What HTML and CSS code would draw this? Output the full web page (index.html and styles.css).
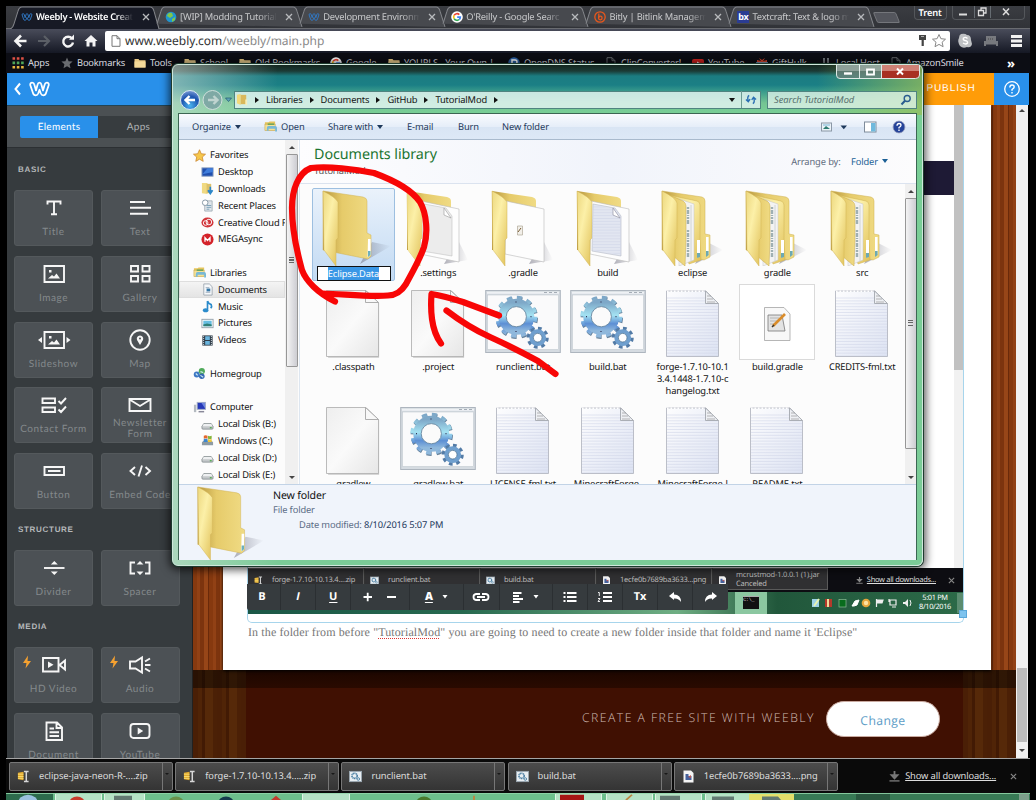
FILE: index.html
```html
<!DOCTYPE html>
<html lang="en">
<head>
<meta charset="utf-8">
<title>Weebly - Website Creator</title>
<link rel="stylesheet" href="styles.css">
</head>
<body>
<svg class="defs" width="0" height="0">
  <defs>
    <linearGradient id="gFlap" x1="0" y1="0" x2="1" y2="1"><stop offset="0" stop-color="#ecd77e"/><stop offset=".4" stop-color="#fcf0a8"/><stop offset="1" stop-color="#e0c058"/></linearGradient>
    <linearGradient id="gBack" x1="0" y1="0" x2="1" y2="0"><stop offset="0" stop-color="#b6963f"/><stop offset=".4" stop-color="#e6cb6a"/><stop offset="1" stop-color="#f0db84"/></linearGradient>
    <linearGradient id="gDoc" x1="0" y1="0" x2="1" y2="1"><stop offset="0" stop-color="#eeeeee"/><stop offset=".5" stop-color="#fafafa"/><stop offset="1" stop-color="#e6e6e6"/></linearGradient>
    <linearGradient id="gTxt" x1="0" y1="0" x2="1" y2="1"><stop offset="0" stop-color="#fdfdfe"/><stop offset="1" stop-color="#dde3f3"/></linearGradient>
    <linearGradient id="gGear" x1="0" y1="0" x2="0" y2="1"><stop offset="0" stop-color="#7ea8c8"/><stop offset=".45" stop-color="#a4e2f2"/><stop offset=".75" stop-color="#5d8fd4"/><stop offset="1" stop-color="#8fb8dc"/></linearGradient>
    <linearGradient id="gShade" x1="0" y1="0" x2="1" y2="0"><stop offset="0" stop-color="#667" stop-opacity=".5"/><stop offset="1" stop-color="#667" stop-opacity="0"/></linearGradient>
    <radialGradient id="gNav" cx=".5" cy=".8" r=".8"><stop offset="0" stop-color="#4ab4ee"/><stop offset=".6" stop-color="#1c53ae"/><stop offset="1" stop-color="#7c9bd6"/></radialGradient>
    <pattern id="pLines" width="10" height="2.9" patternUnits="userSpaceOnUse"><path d="M0 2.400H10" stroke="#cfd6e8" stroke-width=".6"/></pattern>
  </defs>

  <symbol id="folder" viewBox="0 0 76 76">
    <path d="M44 74L75 56 56 52z" fill="url(#gShade)"/>
    <path d="M7 1L47 7Q51 8 51 11V43L55 45V66L52 69 7 60z" fill="url(#gBack)" stroke="#d1b354" stroke-width=".5"/>
    <path d="M52 49h2.600v16l-3 2z" fill="#fff"/><path d="M52 61h2.500v4l-2.500 2z" fill="#6db0bd"/>
    <path d="M7 1Q19 7 22 12V48L20 50V76L8 60z" fill="url(#gFlap)" stroke="#d3b457" stroke-width=".5"/>
  </symbol>
  <symbol id="folderPaper" viewBox="0 0 76 76">
    <path d="M44 74L68 70 58 50z" fill="url(#gShade)"/>
    <path d="M7 1L47 7Q51 8 51 11V60L7 60z" fill="url(#gBack)"/>
    <path d="M21 11L59 19V72L20 64z" fill="#fdfdfd" stroke="#bbb" stroke-width=".6"/>
    <path d="M7 1Q19 7 22 12V48L20 50V76L8 60z" fill="url(#gFlap)" stroke="#d3b457" stroke-width=".5"/>
  </symbol>
  <symbol id="folderFull" viewBox="0 0 76 76">
    <path d="M40 74L68 60 52 52z" fill="url(#gShade)"/>
    <path d="M7 1L47 7Q50 8 50 11V44l5 1V67l-6 3-42-10z" fill="url(#gBack)" stroke="#cfb050" stroke-width=".5"/>
    <path d="M14 5l28 6q3 1 3 4v34l1 21-12 4z" fill="url(#gFlap)" stroke="#cfb050" stroke-width=".5"/>
    <path d="M24 9l15 5v56l-15 6z" fill="#f3f3f3" stroke="#c5c5c5" stroke-width=".5"/>
    <path d="M36 15v56" stroke="#c7cbce" stroke-width=".8"/>
    <path d="M33 17v18M33 40v28" stroke="#9fb0b3" stroke-width="2.400" stroke-dasharray="2 1 4 1 1 1"/>
    <path d="M10 3l18 8q3 2 3 5v34l-1 26-12-10z" fill="url(#gBack)" stroke="#c7a949" stroke-width=".5"/>
    <path d="M42 50h3v16l-3 2zM51 47h2.600v17l-2.600 2z" fill="#fff"/><path d="M42 63h3v4l-3 1zM51 61h2.600v4l-2.600 2z" fill="#6da9b2"/>
    <path d="M7 1Q21 8 22 13V48L20 50V76L8 60z" fill="url(#gFlap)" stroke="#d3b457" stroke-width=".5"/>
  </symbol>
  <symbol id="doc" viewBox="0 0 76 76">
    <path d="M12.500 6.500H51L63.500 18V73H12.500z" fill="#999" opacity=".5" transform="translate(.6 .8)"/>
    <path d="M11.500 6.500H51L63.500 19V72.500H11.500z" fill="url(#gDoc)" stroke="#b3b3b3" stroke-width=".9"/>
    <path d="M50.500 6.500V18.500H63.500z" fill="#f8f8f8" stroke="#a5a5a5" stroke-width=".9"/>
  </symbol>
  <symbol id="txt" viewBox="0 0 76 76">
    <path d="M11.500 7H51L63.500 20V72.500H11.500z" fill="url(#gTxt)" stroke="#b4b8c2" stroke-width=".9"/>
    <path d="M12 12H54L63 21V72H12z" fill="url(#pLines)"/>
    <path d="M12 7.300H50" stroke="#fff" stroke-width="1.400" stroke-dasharray="1.500 2"/>
    <path d="M50.500 7V19.500H63.500z" fill="#eef0f4" stroke="#a3a7ae" stroke-width=".9"/><path d="M52 12h4M52 15h6M52 18h8" stroke="#999" stroke-width=".7"/>
  </symbol>
  <symbol id="bat" viewBox="0 0 76 76">
    <rect x=".7" y="6.500" width="74.600" height="62" fill="#d5dbe1" stroke="#adb5be" stroke-width="1"/>
    <rect x="2.500" y="11" width="71" height="54.500" fill="#fafafb" stroke="#bcc3ca" stroke-width=".5"/>
    <path d="M2 8.700H74" stroke="#eef1f4" stroke-width="2"/><path d="M59 8.500h3M64 8.500h3M69 8.500h3" stroke="#a5adb6" stroke-width="1"/>
    <circle cx="31.300" cy="32.700" r="18.700" fill="none" stroke="#65819b" stroke-width="5" stroke-dasharray="4.900 4.890" transform="translate(.5 1)"/>
    <circle cx="31.300" cy="32.700" r="18.500" fill="none" stroke="url(#gGear)" stroke-width="5" stroke-dasharray="4.900 4.785"/>
    <circle cx="31.300" cy="32.700" r="14" fill="none" stroke="url(#gGear)" stroke-width="8"/>
    <circle cx="31.300" cy="32.700" r="10.100" fill="#fbfbfb" stroke="#63859f" stroke-width=".9"/>
    <path d="M31 17.500v1M31 47v1M16 32.700h1M45.500 32.700h1" stroke="#335" stroke-width="1.200"/>
    <circle cx="52.700" cy="53.700" r="9.300" fill="none" stroke="#537ba6" stroke-width="3.500" stroke-dasharray="3.650 3.650"/>
    <circle cx="52.700" cy="53.700" r="6.400" fill="none" stroke="#6f9fce" stroke-width="4"/>
    <circle cx="52.700" cy="53.700" r="4.300" fill="#fff" stroke="#4d7396" stroke-width=".8"/>
  </symbol>
  <symbol id="thumb" viewBox="0 0 76 76">
    <rect x=".5" y=".5" width="75" height="75" fill="#fff" stroke="#dadada"/>
    <path d="M25.500 23.500H45L51 30V56.500H25.500z" fill="#f8f8f8" stroke="#a5a5a5" stroke-width=".8"/>
    <path d="M29 31h14l3 16H29z" fill="#e3e3e3" stroke="#777" stroke-width=".8"/><path d="M31 34h9M31 37h8M31 40h6" stroke="#aaa" stroke-width=".8"/>
    <path d="M34 42L46 30" stroke="#d98c2b" stroke-width="2.600"/><path d="M33 43l2-2" stroke="#333" stroke-width="1.500"/>
  </symbol>

  <symbol id="w" viewBox="0 0 24 18"><path d="M2.200 4.800Q2 2.300 4.200 2.300 6 2.300 6.500 4.300L8.300 10.500 10 4.300Q10.500 2.300 12 2.300 13.500 2.300 14 4.300L15.700 10.500 17.500 4.300Q18 2.300 19.800 2.300 22 2.300 21.800 4.800L19 13Q18.200 15.700 16 15.700 14.200 15.700 13.300 13.500L12 9.800 10.700 13.500Q9.800 15.700 8 15.700 5.800 15.700 5 13z" fill="none" stroke="currentColor" stroke-width="1.900" stroke-linejoin="round"/></symbol>
  <symbol id="mfolder" viewBox="0 0 12 10"><path d="M.5 1h4l1 1.300h6V9.500H.5z" fill="#e9c883"/><path d="M.5 3.500h11v6H.5z" fill="#f4d999"/></symbol>
  <symbol id="page" viewBox="0 0 10 12"><path d="M1 .7h5L9 3.700v7.600H1z M6 .7V3.700H9" fill="none" stroke="currentColor" stroke-width="1"/></symbol>
  <symbol id="google" viewBox="0 0 14 14"><circle cx="7" cy="7" r="6.800" fill="#fff"/><g fill="none" stroke-width="1.900"><path d="M9.700 4.200A3.900 3.900 0 0 0 3.600 5.200" stroke="#ea4335"/><path d="M3.600 5.200A3.900 3.900 0 0 0 3.600 8.900" stroke="#fbbc05"/><path d="M3.600 8.900A3.900 3.900 0 0 0 9.600 9.900" stroke="#34a853"/><path d="M9.600 9.900Q10.800 9 10.900 7.100H7.200" stroke="#4285f4"/></g></symbol>
  <symbol id="close" viewBox="0 0 8 8"><path d="M1 1l6 6M7 1L1 7" stroke="currentColor" stroke-width="1.300"/></symbol>
  <symbol id="lib" viewBox="0 0 14 13"><path d="M1 2h4l1-1h6v4H1z" fill="#e6c55d"/><rect x="1" y="4" width="11" height="7" fill="#f5e195" stroke="#c7a54a" stroke-width=".6"/><path d="M3 11V8q0-2 2-2h7q2 0 2 2v4h-2V9H5v2z" fill="#79b9d6"/><path d="M4 4h7" stroke="#62a25b" stroke-width="1.500"/></symbol>
  <symbol id="disk" viewBox="0 0 14 12"><path d="M1 8l2-3h8l2 3v2q0 1-1 1H2q-1 0-1-1z" fill="#c4c8ca" stroke="#737b7f" stroke-width=".7"/><path d="M1.500 8h11L11 5.500H3z" fill="#eef0f1"/><path d="M9.500 9.500h2" stroke="#3eaa3a" stroke-width="1.200"/></symbol>
  <symbol id="zip" viewBox="0 0 12 14"><path d="M0 3l6-1v9L0 10z" fill="#e2aa2c"/><path d="M0 4.500h6M0 7h6M0 9h6" stroke="#f8dc74"/><path d="M6.500 1.500h5M9 1.500v11M6.500 12.500h5" stroke="#d8d8d8" stroke-width="1.600"/></symbol>
  <symbol id="sbat" viewBox="0 0 14 12"><rect x=".5" y=".5" width="13" height="11" fill="#e8eef2" stroke="#9aa7b1"/><circle cx="6" cy="5.300" r="2.800" fill="none" stroke="#4b7fa3" stroke-width="1.800" stroke-dasharray="1.300 .5"/><circle cx="10" cy="8.700" r="1.400" fill="none" stroke="#4b7fa3"/></symbol>
  <symbol id="png" viewBox="0 0 11 13"><path d="M.5.5H8L10.500 3V12.500H.5z" fill="#f5f5f5"/><path d="M2.500 4h3v2h3v4h-6z" fill="#46629d"/><path d="M5 7l3-2v3z" fill="#b55"/></symbol>
  <symbol id="dl" viewBox="0 0 12 12"><path d="M6 0v5M2.800 4.500L6 8l3.200-3.500z" fill="currentColor" stroke="currentColor" stroke-width="2"/><path d="M.5 10.800h11" stroke="currentColor" stroke-width="1.500"/></symbol>
</svg>

<div class="browser">
  <div class="tabstrip">
    <div class="tab active"><svg class="shape" viewBox="0 0 150 22" preserveAspectRatio="none"><path d="M0 22Q3 21 4 17L8 5Q9 1 12 1H140Q143 1 144 5L149 22"/></svg><svg class="fav blue" viewBox="0 0 24 18"><use href="#w"/></svg><span>Weebly - Website Creat</span><svg class="x"><use href="#close"/></svg></div>
    <div class="tab"><svg class="shape" viewBox="0 0 150 22" preserveAspectRatio="none"><path d="M4 17L8 5Q9 1 12 1H140Q143 1 144 5L149 20"/></svg><svg class="fav" viewBox="0 0 12 12"><circle cx="6" cy="6" r="5.300" fill="#2095cf"/><path d="M2 5q1-4 5-3l1 3-3 2zM7 8l3-2v3l-3 2z" fill="#81c74a"/></svg><span>[WIP] Modding Tutorial</span><svg class="x"><use href="#close"/></svg></div>
    <div class="tab"><svg class="shape" viewBox="0 0 150 22" preserveAspectRatio="none"><path d="M4 17L8 5Q9 1 12 1H140Q143 1 144 5L149 20"/></svg><svg class="fav blue" viewBox="0 0 24 18"><use href="#w"/></svg><span>Development Environm</span><svg class="x"><use href="#close"/></svg></div>
    <div class="tab"><svg class="shape" viewBox="0 0 150 22" preserveAspectRatio="none"><path d="M4 17L8 5Q9 1 12 1H140Q143 1 144 5L149 20"/></svg><svg class="fav"><use href="#google"/></svg><span>O'Reilly - Google Searc</span><svg class="x"><use href="#close"/></svg></div>
    <div class="tab"><svg class="shape" viewBox="0 0 150 22" preserveAspectRatio="none"><path d="M4 17L8 5Q9 1 12 1H140Q143 1 144 5L149 20"/></svg><svg class="fav" viewBox="0 0 12 12"><g fill="none" stroke="#e8571c" stroke-width="1.300"><circle cx="6" cy="6" r="5.200"/><path d="M4.800 2.500V7"/><circle cx="6.300" cy="7" r="1.800"/></g></svg><span>Bitly | Bitlink Managem</span><svg class="x"><use href="#close"/></svg></div>
    <div class="tab"><svg class="shape" viewBox="0 0 150 22" preserveAspectRatio="none"><path d="M4 17L8 5Q9 1 12 1H140Q143 1 144 5L149 20"/></svg><b class="fav bx">bx</b><span>Textcraft: Text &amp; logo m</span><svg class="x"><use href="#close"/></svg></div>
    <i class="newtab"></i>
    <div class="user">Trent</div>
    <div class="winbtns"><svg viewBox="0 0 72 12"><path d="M6 8.500h8" stroke="#ddd" stroke-width="2"/><path d="M21.500 0v12M37.500 0v12" stroke="#666c72"/><path d="M25.500 4.500h5v5h-5zM28 4V2h5v5h-2" fill="none" stroke="#ddd" stroke-width="1.300"/><path d="M50 2.500l6 6.500M56 2.500L50 9" stroke="#ddd" stroke-width="1.500"/></svg></div>
  </div>

  <div class="navbar">
    <svg class="nav" viewBox="0 0 96 20"><path d="M19.500 10H9M14 4.500L8.500 10l5.500 5.500" fill="none" stroke="#f4f4f4" stroke-width="2.600"/><path d="M31 10h10M37 5l5 5-5 5" fill="none" stroke="#5b5f66" stroke-width="2.200"/><path d="M65 7.500A4.900 4.900 0 1 0 66 11.500" fill="none" stroke="#f4f4f4" stroke-width="2.400"/><path d="M62 8.800h5V3.500z" fill="#f4f4f4"/><path d="M84 4l6.500 6H88.500v5.500h-3v-4h-3v4h-3V10H77.500z" fill="#f4f4f4"/></svg>
    <div class="omni"><svg class="pg"><use href="#page"/></svg><span class="url">www.weebly.com<em>/weebly/main.php</em></span>
      <svg class="key" viewBox="0 0 30 16"><path d="M2 2h7v5H6.800v6H4.600V7H2z" fill="#444"/><path d="M4 3.500h3" stroke="#aaa"/><path d="M22 1.500l1.900 4.200 4.600.5-3.400 3 1 4.500-4.100-2.300-4 2.300 1-4.500-3.500-3 4.600-.5z" fill="none" stroke="#888" stroke-width="1"/></svg></div>
    <svg class="ext" viewBox="0 0 70 20"><path d="M5 3q4-1 6 1 4 0 4 5l1 4q-1 4-5 3-4 2-7-1-3-5-1-8 0-3 2-4z" fill="#bfc1c4"/><path d="M11.500 7.500q-2-2-4-.5-1 2 1.500 2.500 3 .5 2.500 2.500-1.500 2-4.500 0" fill="none" stroke="#fff" stroke-width="1.400"/><path d="M28 10h14v5H40v-1.500H30V15h-2zM30 5h10v6H30z" fill="#77797e"/><path d="M32 8h6" stroke="#444" stroke-dasharray="1 1"/><path d="M55 5.500h11M55 10h11M55 14.500h11" stroke="#f2f2f2" stroke-width="3"/></svg>
  </div>

  <div class="bookmarks">
    <a><svg viewBox="0 0 12 12"><g stroke-width="2.600" stroke-dasharray="2.600 1.700"><path d="M.5 1.500h12" stroke="#df5145"/><path d="M.5 5.900h12" stroke="#4ea65a"/><path d="M.5 10.300h12" stroke="#e8b63f"/></g></svg>Apps</a>
    <a><svg viewBox="0 0 12 12"><path d="M6 .5l1.600 3.700 4 .4-3 2.700.9 4L6 9.300l-3.500 2 .9-4-3-2.700 4-.4z" fill="#6a6c70"/></svg>Bookmarks</a>
    <a><svg><use href="#mfolder"/></svg>Tools</a>
    <a><svg><use href="#mfolder"/></svg>School</a>
    <a><svg><use href="#mfolder"/></svg>Old Bookmarks</a>
    <a><svg><use href="#google"/></svg>Google</a>
    <a><svg><use href="#mfolder"/></svg>YOURLS - Your Own |</a>
    <a><svg viewBox="0 0 12 12"><circle cx="6" cy="6" r="5.800" fill="#2c62a7"/><path d="M4 10V3h3q2 0 2 2t-2 2H4" fill="none" stroke="#fff" stroke-width="1.500"/></svg>OpenDNS Status</a>
    <a><svg class="dim"><use href="#page"/></svg>ClipConverter!</a>
    <a><svg viewBox="0 0 12 12"><rect y="2" width="12" height="9" rx="2" fill="#d2231f"/><path d="M5 4.500l3.500 2L5 8.500z" fill="#fff"/></svg>YouTube</a>
    <a><svg viewBox="0 0 12 12"><path d="M1 3l4 1-2-3 3 2 3-2-2 3 4-1v8H1z" fill="#de4a32"/><path d="M0 6h12" stroke="#6bb3dc" stroke-width="1.600"/></svg>GiftHulk</a>
    <a><svg viewBox="0 0 12 12"><path d="M4 1v10M8 1v10" stroke="#70757b" stroke-width="2"/></svg>Local Host</a>
    <a><svg class="dim"><use href="#page"/></svg>AmazonSmile</a>
    <b>»</b>
  </div>

  <header class="wbar">
    <svg class="wlogo" viewBox="0 0 46 24"><path d="M10 6.500L5.500 12l4.500 5.500" fill="none" stroke="#fff" stroke-width="2"/><svg x="18" y="3.500" width="23" height="17" viewBox="0 0 24 18" color="#fff"><use href="#w"/></svg></svg>
    <div class="publish">PUBLISH</div><div class="help"><svg viewBox="0 0 18 18"><circle cx="9" cy="9" r="7.300" fill="none" stroke="#fff" stroke-width="1.300"/><path d="M6.800 7.500Q7 5 9 5q2.200 0 2.200 1.900Q11.200 8 9 9.500v1.200M9 12v1.500" fill="none" stroke="#fff" stroke-width="1.400"/></svg></div>
  </header>

  <main class="work">
    <aside class="side">
      <div class="seg"><b>Elements</b><span>Apps</span></div>
      <h2 class="first">BASIC</h2>
      <div class="tiles">
        <div class="tile"><svg viewBox="0 0 24 24"><path d="M5.500 8.500V5.500h13v3M12 5.500V18M9 18.200h6" /></svg>Title</div>
        <div class="tile"><svg viewBox="0 0 24 24"><path d="M2 6h15M2 11.800h21M2 17.700h18"/></svg>Text</div>
        <div class="tile"><svg viewBox="0 0 24 24"><path d="M2.500 4h19.500v16H2.500z"/><path d="M6 16.500h12l-3.500-5-2.500 3-2-1.500zM7 8h2.500v2.500H7z" class="f"/></svg>Image</div>
        <div class="tile"><svg viewBox="0 0 24 24"><path d="M3 4h7v5.500H3zM14.500 4h7v5.500h-7zM3 14h7v5.500H3zM14.500 14h7v5.500h-7z"/></svg>Gallery</div>
        <div class="tile"><svg class="wide" viewBox="0 0 36 24"><path d="M8.500 4h19.500v16H8.500z"/><path d="M12 16.500h12l-3.500-5-2.500 3-2-1.500zM13 8h2.500v2.500H13zM6 9v6l-4-3zM30.500 9v6l4-3z" class="f"/></svg>Slideshow</div>
        <div class="tile"><svg viewBox="0 0 24 24"><circle cx="12" cy="12" r="9.700"/><path d="M12 17l-3-5q-1-4 3-4.500 4 .5 3 4.500z" class="f"/><circle cx="12" cy="10.500" r="1" fill="#4c5155" stroke="none"/></svg>Map</div>
        <div class="tile"><svg class="wide" viewBox="0 0 36 24"><path d="M6.500 5.500h12.500v4.500H6.500zM6.500 14.500h12.500v4.500H6.500zM22.500 8l2.500 2.500 5-5.500M22.500 16.500L25 19l5-5.500"/></svg>Contact Form</div>
        <div class="tile two"><svg viewBox="0 0 24 24"><path d="M1.500 6h21v12h-21zM1.500 6.500L12 13l10.500-6.500"/></svg>Newsletter<br>Form</div>
        <div class="tile"><svg viewBox="0 0 24 24"><path d="M2.500 8h19.500v8H2.500zM6 12h12.500"/></svg>Button</div>
        <div class="tile"><svg viewBox="0 0 24 24"><path d="M7 8l-4.500 4L7 16M17.500 8l4.500 4-4.500 4M14 6.500L10.500 17.500"/></svg>Embed Code</div>
      </div>
      <h2>STRUCTURE</h2>
      <div class="tiles">
        <div class="tile"><svg viewBox="0 0 24 24"><path d="M2 12h20.500"/><path d="M12.300 5l3.500 3.500h-7zM12.300 19l3.500-3.500h-7z" class="f"/></svg>Divider</div>
        <div class="tile"><svg viewBox="0 0 24 24"><path d="M7 6.500H2.500v11H7M17 6.500h4.500v11H17"/><path d="M12 5l3.500 3.500h-7zM12 19l3.500-3.500h-7z" class="f"/></svg>Spacer</div>
      </div>
      <h2>MEDIA</h2>
      <div class="tiles">
        <div class="tile"><svg class="bolt" viewBox="0 0 10 14"><path d="M6 .5L1 8h3.500L3.500 13.500 9 6H5.500z"/></svg><svg class="wide" viewBox="0 0 36 24"><path d="M7 5h15.500v13.500H7zM23.500 12l5.500-4.500v9z"/><path d="M12 8.500v6.500l5.500-3.200z" class="f"/></svg>HD Video</div>
        <div class="tile"><svg class="bolt" viewBox="0 0 10 14"><path d="M6 .5L1 8h3.500L3.500 13.500 9 6H5.500z"/></svg><svg viewBox="0 0 24 24"><path d="M2 8.500h5.500L14 4.500v15l-6.500-4H2zM17 8.500l5-3M17 12h5.500M17 15.500l5 3"/></svg>Audio</div>
        <div class="tile"><svg viewBox="0 0 24 24"><path d="M4.500 3.500H15L20 8.500v12.500H4.500zM14.500 3.500v5.500H20M7.500 9.500H12M7.500 13.300h9.500M7.500 17h9.500"/></svg>Document</div>
        <div class="tile"><svg viewBox="0 0 24 24"><rect x="2.500" y="5" width="19" height="14" rx="3"/><path d="M9.700 8.500v7l5.500-3.500z" class="f"/></svg>YouTube</div>
      </div>
    </aside>

    <section class="canvas">
      <div class="page">
        <div class="shot">
          <div class="shotview"><i class="navy"></i><div class="sbar2"><i></i></div></div>
          <div class="mini">
            <div class="mdl"><svg><use href="#zip"/></svg>forge-1.7.10-10.13.4....zip</div>
            <div class="mdl"><svg><use href="#sbat"/></svg>runclient.bat</div>
            <div class="mdl"><svg><use href="#sbat"/></svg>build.bat</div>
            <div class="mdl"><svg><use href="#png"/></svg>1ecfe0b7689ba3633...png</div>
            <div class="mdl"><svg><use href="#png"/></svg><span>mcrustmod-1.0.0.1 (1).jar<br>Canceled</span></div>
            <div class="mall"><svg><use href="#dl"/></svg><u>Show all downloads...</u><svg><use href="#close"/></svg></div>
          </div>
          <div class="mtask">
            <div class="cmd"><i>C:\_</i></div>
            <svg class="tray" viewBox="0 0 108 16"><path d="M3 4h7v8H3z" fill="#9ed2e8"/><path d="M5 11l5-7" stroke="#e9f4b0" stroke-width="2"/><rect x="16" y="4" width="7" height="8" fill="#b5392b"/><path d="M19 4v8" stroke="#f1dc9b" stroke-width="2"/><rect x="30" y="4.500" width="7" height="7.500" fill="#086c1d" stroke="#8cb797" stroke-width=".7"/><path d="M43 11l3-5 4-1-2 5-3 1z" fill="#fff" stroke="#fff"/><circle cx="57" cy="8" r="4.300" fill="#e6a63c"/><circle cx="57" cy="8" r="2.200" fill="#ffe2a0"/><path d="M67.500 4v8M68 5h6l-1 3h-5" fill="#eee" stroke="#eee" stroke-width="1.200"/><path d="M81 5h6v5h-6zM83 12h4M80 4v3" fill="none" stroke="#eee" stroke-width="1.200"/><path d="M94 7h2l3-3v8l-3-3h-2z" fill="#eee"/><path d="M101 5q2 3 0 6" stroke="#eee" fill="none"/></svg>
            <time>5:01 PM<br>8/10/2016</time><i class="peek"></i>
          </div>
          <i class="handle"></i>
        </div>
        <div class="rte">
          <b>B</b><b class="it">I</b><b class="un">U</b>
          <span class="w2"><svg viewBox="0 0 44 16"><path d="M5.500 8h8.500M9.700 3.800v8.400M29 8h9"/></svg></span>
          <span class="w3"><b class="un">A</b><svg class="car" viewBox="0 0 8 6"><path d="M1.500 1h5L4 4.500z" class="f"/></svg></span>
          <span><svg viewBox="0 0 20 16"><path d="M9 5H5q-2.500.3-2.500 3T5 11h4M11 5h4q2.500.3 2.500 3t-2.500 3h-4M6 8h8"/></svg></span>
          <span class="w4"><svg class="sm" viewBox="0 0 12 16"><path d="M1 4h8.500M1 7h6M1 10h10M1 13h6.500"/></svg><svg class="car" viewBox="0 0 8 6"><path d="M1.500 1h5L4 4.500z" class="f"/></svg></span>
          <span><svg viewBox="0 0 20 16"><path d="M7 4h9.500M7 8h9.500M7 12h9.500M3.500 4h2M3.500 8h2M3.500 12h2"/></svg></span>
          <span><svg viewBox="0 0 20 16"><path d="M8 4h9M8 8h9M8 12h9"/><path d="M3 3.500h1.300V7M3 9.500h2L3 12.500h2" stroke-width=".9"/></svg></span>
          <b class="tx">Tx</b>
          <span><svg viewBox="0 0 20 16"><path d="M4 7l5-4v2.500q7 0 7 7.500-2.500-4-7-3.500V11z" class="f"/></svg></span>
          <span><svg viewBox="0 0 20 16"><path d="M16 7l-5-4v2.500q-7 0-7 7.500 2.500-4 7-3.500V11z" class="f"/></svg></span>
        </div>
        <p>In the folder from before "<u>TutorialMod</u>" you are going to need to create a new folder inside that folder and name it 'Eclipse"</p>
      </div>
      <footer class="foot"><i class="wood"></i><div class="cta"><span>CREATE A FREE SITE WITH WEEBLY</span><a>Change</a></div><i class="wood"></i></footer>
    </section>
    <div class="vbar"><i class="up"></i><i class="thumbbar"></i><i class="dn"></i></div>
  </main>

  <div class="downloads">
    <div class="item"><svg><use href="#zip"/></svg><span>eclipse-java-neon-R-....zip</span><i></i></div>
    <div class="item"><svg><use href="#zip"/></svg><span>forge-1.7.10-10.13.4.....zip</span><i></i></div>
    <div class="item"><svg><use href="#sbat"/></svg><span>runclient.bat</span><i></i></div>
    <div class="item"><svg><use href="#sbat"/></svg><span>build.bat</span><i></i></div>
    <div class="item"><svg><use href="#png"/></svg><span>1ecfe0b7689ba3633....png</span><i></i></div>
    <svg class="dla"><use href="#dl"/></svg><u>Show all downloads...</u><svg class="dlx"><use href="#close"/></svg>
  </div>
  <svg class="taskbar" viewBox="0 0 1024 8" preserveAspectRatio="none">
    <rect width="1024" height="8" fill="#6dbf8c"/><rect width="47" height="8" fill="#2d6b4c"/><rect x="780" width="244" height="8" fill="#387a55"/><rect x="850" width="34" height="8" fill="#2a5940"/>
    <g fill="#b5e2c5" stroke="#e5f6ea"><path d="M49.500 8V.5h46V8M98.500 8V.5h40V8M296.500 8V.5h47V8M549.500 8V.5h46V8M600.500 8V.5h46V8M649.500 8V.5h46V8M699.500 8V.5h46V8"/></g>
    <rect x="743" y="1" width="45" height="7" fill="#e3df6a"/><path d="M0 .5H1024" stroke="#8fd3a8"/>
    <circle cx="22" cy="12" r="10" fill="#9bc1df"/><circle cx="71" cy="12" r="8" fill="#c93b2b"/><circle cx="170" cy="12" r="8" fill="#69924b"/><circle cx="220" cy="12" r="8" fill="#163c4d"/><path d="M265 8l5-5 5 5z" fill="#c43a2d"/><circle cx="418" cy="12" r="8" fill="#4a7a2d"/><path d="M554 8V2h24v6z" fill="#a51515"/><path d="M654 8V3h20v5zM706 8V4h22v4zM756 8V4h16l3 4zM108 8V3h18v5z" fill="#637a72"/><path d="M620 8l6-6M468 8V3" stroke="#b84" stroke-width="2"/><rect x="1013" y="1" width="10" height="7" fill="#7d9f8b"/>
  </svg>
</div>

<div class="explorer">
  <div class="caption"><svg viewBox="0 0 84 14"><path d="M.5 0V10Q.5 13.500 4 13.500H45V0z" fill="#66817c" fill-opacity=".8"/><path d="M45 0h38.500V10q0 3.500-4 3.500H45z" fill="#a83022"/><path d="M45 0h38.500v6H45z" fill="#cf8175"/><path d="M.5 0V10Q.5 13.500 4 13.500H79.500q4 0 4-3.500V0M23.500 0v13.500M45.500 0v13.500" fill="none" stroke="#dde9e6" stroke-width="1"/><path d="M1 0h44v6H1z" fill="#fff" opacity=".3"/><path d="M8 8.500h8" stroke="#fff" stroke-width="2.400"/><path d="M31 4.500h7v5h-7z" fill="none" stroke="#fff" stroke-width="1.800"/><path d="M61 3.500l6 6M67 3.500l-6 6" stroke="#fff" stroke-width="2"/></svg></div>
  <div class="addr">
    <svg class="bf" viewBox="0 0 56 22"><circle cx="12" cy="11" r="9.500" fill="url(#gNav)" stroke="#d9e8f2"/><path d="M17 11H8M11.500 7L7.500 11l4 4" fill="none" stroke="#fff" stroke-width="2.400"/><circle cx="34.500" cy="11" r="9.500" fill="#7fa9a5" stroke="#d0e0dc"/><path d="M30 11h9M35.500 7l4 4-4 4" fill="none" stroke="#c0d4d0" stroke-width="2.400"/><path d="M47.500 9h6l-3 3.500z" fill="#5fa6b8" stroke="#1e5670" stroke-width=".7"/></svg>
    <div class="crumbs"><svg class="fi" viewBox="0 0 14 14"><path d="M1 2l4-1v12l-4-2z" fill="#f2d979"/><path d="M5 2h6v10H5z" fill="#d9b85c"/><path d="M10 7h2v6h-2z" fill="#f7eebb"/></svg><i></i><span>Libraries</span><i></i><span>Documents</span><i></i><span>GitHub</span><i></i><span>TutorialMod</span><i></i><i class="d"></i><svg class="ref" viewBox="0 0 14 12"><path d="M5 1.500Q2.500 3 4 7.500M1.500 6l2.500 2.500L6 5.500M9 10.500Q11.500 9 10 4.500M7.800 6.500l2-3 2.700 2.500" fill="none" stroke="#2a6fb3" stroke-width="1.500"/></svg></div>
    <div class="search"><span>Search TutorialMod</span><svg viewBox="0 0 12 12"><circle cx="7.200" cy="4.500" r="3" fill="none" stroke="#2a5d8f" stroke-width="1.400"/><path d="M5 6.700L1.500 10.500" stroke="#2a5d8f" stroke-width="2"/></svg></div>
  </div>
  <div class="client">
    <div class="cmds"><span>Organize<i></i></span><span><svg><use href="#lib"/></svg>Open</span><span>Share with<i></i></span><span>E-mail</span><span>Burn</span><span>New folder</span>
      <svg class="vw" viewBox="0 0 86 16"><rect x="1.500" y="4" width="10" height="8" fill="#eaf2f8" stroke="#8b98a6"/><path d="M3 10l3-3 4 3z" fill="#2d7b70"/><path d="M3 6h7" stroke="#7ab6d6"/><path d="M20.500 6.500h6.500l-3.200 3.700z" fill="#1e395b"/><rect x="44.500" y="3" width="11.500" height="10" fill="#fff" stroke="#7f8c9b"/><rect x="51" y="4" width="4.500" height="8.500" fill="#6fb9dd"/><circle cx="79" cy="8" r="5.900" fill="#25449a" stroke="#8b93b8" stroke-width=".8"/><path d="M77 6.700Q77.200 4.500 79 4.500q2 0 2 1.700Q81 7.300 79 8.500v1M79 10.500V12" fill="none" stroke="#fff" stroke-width="1.300"/></svg></div>
    <div class="mid">
      <ul class="tree">
        <li class="top"><svg viewBox="0 0 14 14"><path d="M7 .8l1.900 4.300 4.600.5-3.500 3.100 1 4.600L7 11l-4 2.300 1-4.600L.5 5.600l4.600-.5z" fill="#f6c74b" stroke="#c8812a" stroke-width=".8"/></svg>Favorites</li>
        <li><svg viewBox="0 0 14 14"><rect x="1" y="2" width="12" height="9" fill="#1f4fae" stroke="#8fa3c2"/><path d="M1.500 9L7 2.500h6v4z" fill="#3f7ddb"/></svg>Desktop</li>
        <li><svg viewBox="0 0 14 14"><path d="M1 1h6v12l-6-1z" fill="#f0d981"/><path d="M6 2h5v10H6z" fill="#dcc069"/><path d="M10 5v5M7.500 9l2.500 3.500L12.500 9" fill="#2d87c9" stroke="#2d87c9" stroke-width="1.800"/></svg>Downloads</li>
        <li><svg viewBox="0 0 14 14"><path d="M4 2h8v11H4z" fill="#dfe5ea" stroke="#96a2ab" stroke-width=".8"/><circle cx="4.500" cy="4" r="3" fill="#fff" stroke="#8495a3"/><path d="M6 7h5M6 9h5M6 11h3" stroke="#7aa0b7"/></svg>Recent Places</li>
        <li><svg viewBox="0 0 14 14"><ellipse cx="7" cy="7" rx="6.500" ry="5.500" fill="#d1353a"/><circle cx="5" cy="7.500" r="2.500" fill="none" stroke="#fff"/><circle cx="8.500" cy="6.500" r="3" fill="none" stroke="#fff"/></svg>Creative Cloud Files</li>
        <li><svg viewBox="0 0 14 14"><circle cx="7" cy="7" r="6.500" fill="#d4232a"/><path d="M4.300 9.500V5L7 8l2.700-3v4.500" fill="none" stroke="#fff" stroke-width="1.400"/></svg>MEGAsync</li>
        <li class="top gap"><svg><use href="#lib"/></svg>Libraries</li>
        <li class="sel"><svg viewBox="0 0 14 14"><path d="M3 1h6l3 3v9H3z" fill="#f6f8fa" stroke="#8d99a5" stroke-width=".8"/><path d="M5 5h4M5 10h5" stroke="#9ab"/><path d="M6 6h4v3H6z" fill="#3577a7"/></svg>Documents</li>
        <li><svg viewBox="0 0 14 14"><path d="M7 1v9M7 1q1 3 4 4 1 2-.5 4" fill="none" stroke="#2b8bcb" stroke-width="1.800"/><ellipse cx="5" cy="11" rx="3" ry="2.200" fill="#2b8bcb"/></svg>Music</li>
        <li><svg viewBox="0 0 14 14"><rect x="1" y="2.500" width="12" height="9" fill="#fff" stroke="#93a1ac"/><rect x="2.500" y="4" width="9" height="6" fill="#66bde0"/><path d="M2.500 10V8l4-1 5 1v2z" fill="#2f7e77"/></svg>Pictures</li>
        <li><svg viewBox="0 0 14 14"><rect x="1.500" y="1.500" width="11" height="11" fill="#303d49"/><path d="M4.500 2.500h5v4h-5zM4.500 7.500h5v4h-5z" fill="#69b4dd"/><path d="M2.800 2v10M11.200 2v10" stroke="#cfd8df" stroke-dasharray="1.200 1"/></svg>Videos</li>
        <li class="top gap"><svg viewBox="0 0 14 14"><circle cx="4" cy="8" r="3.200" fill="#3e78c4"/><circle cx="9.500" cy="4.500" r="3.300" fill="#4faa5a"/><circle cx="9.500" cy="10" r="3" fill="#3467b3"/><path d="M8 5l3 1M3 7l2 2M8 9l3 2" stroke="#d2ecf3" stroke-width="1.200"/></svg>Homegroup</li>
        <li class="top gap"><svg viewBox="0 0 14 14"><rect x="4.500" y="1.500" width="9" height="7.500" fill="#2639b8" stroke="#a7b1c7"/><path d="M9 2h4v6z" fill="#6d86df"/><path d="M6 11.500h6" stroke="#889" stroke-width="1.600"/><rect x="1" y="4" width="2.500" height="8" fill="#b4bac0"/></svg>Computer</li>
        <li><svg><use href="#disk"/></svg>Local Disk (B:)</li>
        <li><svg viewBox="0 0 14 14"><path d="M1 9l2-2h8l2 2v3H1z" fill="#8e9ba3"/><path d="M3 2q2-1.500 4 0v3q-2-1-4 0z" fill="#e4672d"/><path d="M7.500 2q2 1 4 0v3q-2 1-4 0z" fill="#84b53c"/><path d="M3 5.500q2-1 4 0v3H3z" fill="#3c87cf"/><path d="M7.500 5.500q2 1 4 0v3h-4z" fill="#efc73a"/></svg>Windows (C:)</li>
        <li><svg><use href="#disk"/></svg>Local Disk (D:)</li>
        <li><svg><use href="#disk"/></svg>Local Disk (E:)</li>
      </ul>
      <div class="scroll left"><i class="a"></i><i class="t"></i><i class="a down"></i></div>
      <div class="content">
        <div class="libhead"><div><h1>Documents library</h1><small>TutorialMod</small></div><p>Arrange by: <b>Folder</b><i></i></p></div>
        <div class="files">
          <div class="grid">
            <figure class="hot"><svg><use href="#folder"/></svg><figcaption><mark>Eclipse.Data</mark></figcaption></figure>
            <figure><svg viewBox="0 0 76 76"><use href="#folderPaper"/><path d="M24 14l22 4 6 8v40l-30-5z" fill="#ececec" stroke="#c2c2c2" stroke-width=".6"/><path d="M44 18v7l7 3z" fill="#fff" stroke="#999" stroke-width=".6"/><path d="M7 1Q19 7 22 12V48L20 50V76L8 60z" fill="url(#gFlap)"/></svg><figcaption>.settings</figcaption></figure>
            <figure><svg viewBox="0 0 76 76"><use href="#folderPaper"/><path d="M32.500 36h5v9h-5z" fill="#f2efe9" stroke="#b0a998" stroke-width=".7"/><path d="M33 42l3-4" stroke="#775b32"/></svg><figcaption>.gradle</figcaption></figure>
            <figure><svg viewBox="0 0 76 76"><use href="#folderPaper"/><path d="M23 14l22 4 6 8v40l-29-5z" fill="#e2e6f1" stroke="#b6bac6" stroke-width=".6"/><path d="M23 15l22 4 6 8v38l-29-5z" fill="url(#pLines)"/><path d="M43 18v7l7 3z" fill="#fff" stroke="#889" stroke-width=".6"/></svg><figcaption>build</figcaption></figure>
            <figure><svg><use href="#folderFull"/></svg><figcaption>eclipse</figcaption></figure>
            <figure><svg><use href="#folderFull"/></svg><figcaption>gradle</figcaption></figure>
            <figure><svg><use href="#folderFull"/></svg><figcaption>src</figcaption></figure>
            <figure><svg><use href="#doc"/></svg><figcaption>.classpath</figcaption></figure>
            <figure><svg><use href="#doc"/></svg><figcaption>.project</figcaption></figure>
            <figure><svg><use href="#bat"/></svg><figcaption>runclient.bat</figcaption></figure>
            <figure><svg><use href="#bat"/></svg><figcaption>build.bat</figcaption></figure>
            <figure><svg><use href="#txt"/></svg><figcaption>forge-1.7.10-10.1<br>3.4.1448-1.7.10-c<br>hangelog.txt</figcaption></figure>
            <figure><svg><use href="#thumb"/></svg><figcaption>build.gradle</figcaption></figure>
            <figure><svg><use href="#txt"/></svg><figcaption>CREDITS-fml.txt</figcaption></figure>
            <figure><svg><use href="#doc"/></svg><figcaption>gradlew</figcaption></figure>
            <figure><svg><use href="#bat"/></svg><figcaption>gradlew.bat</figcaption></figure>
            <figure><svg><use href="#txt"/></svg><figcaption>LICENSE-fml.txt</figcaption></figure>
            <figure><svg><use href="#txt"/></svg><figcaption>MinecraftForge-</figcaption></figure>
            <figure><svg><use href="#txt"/></svg><figcaption>MinecraftForge-l</figcaption></figure>
            <figure><svg><use href="#txt"/></svg><figcaption>README.txt</figcaption></figure>
          </div>
          <div class="scroll right"><i class="a"></i><i class="t"></i><i class="a down"></i></div>
        </div>
      </div>
    </div>
    <div class="details"><svg><use href="#folder"/></svg><div><b>New folder</b><span>File folder</span><span class="dm">Date modified: <em>8/10/2016 5:07 PM</em></span></div></div>
  </div>
</div>

<svg class="ink" viewBox="0 0 1036 800"><path d="M335 301.500C318 293 306 281 302 270C297 252 292 230 292 208C292 190 298 173 311 168C328 166 355 169 374 173C393 180 412 190 420 202C427 214 428 234 424 247C420 259 413 271 406 284C401 292 396 295 388 295.500C370 297 343 294 323 293.500"/><path d="M499 315.500L463 302Q444 296 431.500 294Q430.500 308 432 319Q434 334 441 343.500M446.500 310.500Q468 327 490 337T538 361L555.500 374"/></svg>
</body>
</html>
```
FILE: styles.css
```css
* { box-sizing: border-box; }
body { margin: 0; width: 1036px; height: 800px; overflow: hidden; background: #000; position: relative; font: 9.3px/12px "Noto Sans", "Open Sans", sans-serif; letter-spacing: -.14px; text-rendering: geometricPrecision; color: #111; }
.defs { position: absolute; }
i, em { font-style: normal; }
svg { flex: none; display: block; }
h1, h2, p, ul, figure { margin: 0; padding: 0; font-weight: normal; }

/* browser chrome */
.browser { margin-left: 6px; padding-top: 6px; width: 1024px; height: 800px; display: flex; flex-direction: column; overflow: hidden; }
.tabstrip { height: 23px; flex: none; display: flex; background: linear-gradient(#3a3c41, #313338); padding-left: 6px; border-bottom: 1px solid #6a6c71; }
.tab { position: relative; width: 143.100px; height: 22px; display: flex; align-items: center; padding-left: 10px; color: #c9cacc; flex: none; }
.tab .shape { position: absolute; left: -2px; top: 0; width: 150px; height: 23px; fill: #47494e; stroke: #84868b; stroke-width: 1; }
.tab.active .shape { fill: #171a25; z-index: 0; }
.tab.active { color: #fff; font-weight: 600; letter-spacing: -.25px; padding-left: 9px; }
.tab .fav { position: relative; width: 12px; height: 12px; margin-right: 3px; flex: none; }
.tab.active .x { margin-left: 7px; }
.blue { color: #3179c5; }
.bx { background: #2b3c93; color: #fff; font: bold 9px/12px "Noto Sans", sans-serif; text-align: center; }
.tab span { position: relative; width: 99px; white-space: nowrap; letter-spacing: -.2px; -webkit-mask-image: linear-gradient(90deg, #000 80%, transparent 98%); mask-image: linear-gradient(90deg, #000 80%, transparent 98%); }
.tab.active span { letter-spacing: -.32px; }
.tab .x { position: relative; width: 8px; height: 8px; margin-left: 6px; color: #b8babd; }
.newtab { width: 23px; height: 11px; margin: 6px 12px 0 4px; background: #54565d; border: 1px solid #74767b; transform: skewX(22deg); border-radius: 2px; flex: none; }
.user { width: 33px; height: 14px; border: 1px solid #54575b; border-top: 0; border-radius: 0 0 4px 4px; color: #fff; text-align: center; font-weight: 600; line-height: 14px; flex: none; margin: 0 0 0 4px; }
.winbtns { margin-left: 5px; width: 73px; height: 14px; border: 1px solid #54575b; border-top: 0; border-radius: 0 0 4px 4px; flex: none; }
.winbtns svg { width: 72px; height: 12px; }
.navbar { height: 24px; flex: none; display: flex; background: linear-gradient(#494c5a, #151824); align-items: center; }
.nav { width: 96px; height: 20px; margin-left: 1px; }
.nav + .omni { margin-left: 2px; }
.omni { width: 845px; height: 20px; background: #fff; border-radius: 2px; display: flex; align-items: center; padding-left: 6px; }
.pg { width: 10px; height: 12px; color: #777; }
.url { margin-left: 4px; flex: 1; font-size: 12px; letter-spacing: -.02px; line-height: 18px; color: #333; }
.url em { color: #8a8a8a; }
.key { width: 30px; height: 16px; margin-right: 3px; }
.ext { width: 70px; height: 20px; margin-left: 6px; }
.bookmarks { height: 20px; flex: none; background: #0c0d14; display: grid; grid-template-columns: 49px 73px 50px 55px 91px 58px 120px 97px 87px 64px 64px 70px 117px 12px; padding-left: 6px; color: #dcdde0; align-items: center; letter-spacing: -.16px; }
.bookmarks a { display: flex; align-items: center; gap: 4px; white-space: nowrap; }
.bookmarks a svg { width: 12px; height: 12px; }
.bookmarks b { font-size: 13px; line-height: 12px; color: #fff; }
.dim { color: #63666b; }

/* editor header */
.wbar { height: 32px; flex: none; background: #2990ea; display: flex; margin-left: 1px; width: 1022px; }
.wlogo { width: 46px; height: 24px; margin: 4px auto 0 3px; }
.publish { background: #ff9c08; color: #fff; font: 10px/32px "Liberation Sans", Arial, sans-serif; letter-spacing: .9px; text-align: right; padding-right: 18.500px; width: 150px; }
.help { width: 35px; display: flex; align-items: center; justify-content: center; }
.help svg { width: 18px; height: 18px; }

/* sidebar */
.work { flex: 1; min-height: 0; display: flex; margin-left: 1px; width: 1021px; overflow: hidden; }
.side { width: 186px; background: #363b3e; overflow: hidden; color: #84898c; border-right: 1px solid #222; flex: none; border-top: 1px solid #245; }
.seg { height: 42px; background: #4b5053; border-bottom: 1px solid #2c3033; padding: 10px 13px 9px; display: flex; font: 10px/23px Lato, sans-serif; letter-spacing: .3px; text-align: center; }
.seg b { width: 79px; background: #2990ea; color: #fff; font-weight: normal; border-radius: 2px 0 0 2px; }
.seg span { width: 82px; background: #373c3f; color: #adb1b3; }
.side h2 { font: bold 8px/41px "Liberation Sans", Arial, sans-serif; letter-spacing: .7px; color: #b5b8ba; padding-left: 11px; height: 41px; }
.side h2.first { height: 42px; line-height: 43px; }
.tiles { display: grid; grid-template-columns: 79px 79px; grid-auto-rows: 56px; gap: 9.800px 7.500px; padding-left: 7px; }
.tile { position: relative; background: #4c5155; border-radius: 3px; border: 1px solid #54595c; display: flex; flex-direction: column; align-items: center; font: 10px/13px Lato, sans-serif; letter-spacing: .55px; padding-top: 5px; white-space: nowrap; text-align: center; gap: 6px; }
.tile.two { line-height: 10.500px; gap: 1px; }
.tile svg { width: 24px; height: 24px; fill: none; stroke: #f6f6f6; stroke-width: 1.900; }
.tile svg.wide { width: 36px; }
.tile .f { fill: #f6f6f6; stroke: none; }
.tile svg.bolt { position: absolute; left: 7px; top: 7px; width: 10px; height: 14px; fill: #f5a130; stroke: none; }

/* page canvas */
.canvas { width: 823px; flex: none; background: repeating-linear-gradient(90deg, #86390f 0 4px, #914115 4px 7px, #7c340e 7px 11px, #974618 11px 15px, #6a2a0a 15px 16px); display: flex; flex-direction: column; }
.page { width: 768px; height: 565px; margin-left: 30px; background: #fff; padding-left: 24px; box-shadow: 0 1px 3px #000; flex: none; position: relative; }
.shot { position: relative; width: 717px; height: 518px; border: 1px solid #a7d5ec; border-top: 0; border-radius: 0 0 5px 5px; }
.shotview { height: 463px; display: flex; justify-content: flex-end; align-items: flex-start; }
.navy { width: 31px; height: 34px; background: #1e1a35; margin-top: 56px; }
.sbar2 { width: 9px; height: 463px; background: #f1f1f1; }
.sbar2 i { display: block; height: 265px; background: #c1c1c1; }
.mini { height: 24px; background: #0d0d12; display: flex; font-size: 7.500px; line-height: 9px; letter-spacing: -.2px; color: #bbb; }
.mdl { width: 116px; height: 22px; border: 1px solid #5a5a5a; border-left-color: #333; background: #303032; display: flex; align-items: center; gap: 9px; padding: 2px 0 0 5px; white-space: nowrap; }
.mdl svg { width: 9px; height: 9px; }
.mall { margin-left: auto; display: flex; align-items: center; gap: 4px; color: #ddd; padding-right: 8px; }
.mall svg { width: 7px; height: 7px; color: #888; }
.mall u { margin-right: 8px; letter-spacing: -.3px; }
.mtask { height: 22px; background: linear-gradient(90deg, #1b5746 0, #27694f 30%, #6fae83 60%, #21573b 74%, #2c6a48); display: flex; align-items: center; justify-content: flex-end; color: #fff; }
.cmd { width: 32px; height: 22px; background: #8bc7a0; padding: 4px 8px; margin-right: 42px; }
.cmd i { display: block; width: 16px; height: 13px; background: #111; color: #ddd; font: 5px/7px "Liberation Mono", monospace; border-top: 1px solid #aaa; }
.tray { width: 108px; height: 16px; }
.mtask time { font-size: 7.400px; line-height: 9.500px; text-align: center; width: 34px; margin: 0 5px 0 1px; letter-spacing: -.35px; }
.peek { width: 6px; height: 20px; background: #5b8c70; }
.handle { position: absolute; right: -4px; bottom: 4px; width: 8px; height: 8px; background: #7ec3ee; border: 1px solid #5ba8da; }
.rte { position: absolute; left: 24px; top: 479px; width: 481px; height: 26px; background: #363b3e; border-radius: 0 0 2px 2px; display: flex; color: #fff; padding-left: 0; }
.rte > * { width: 35.200px; border-right: 1px solid #2b2f32; display: flex; align-items: center; justify-content: center; font: bold 11px/26px "Open Sans", "Noto Sans", sans-serif; letter-spacing: 0; flex: none; }
.rte > :first-child { width: 34px; padding-right: 3px; }
.rte > :last-child { border: 0; }
.rte .it { font-style: italic; }
.rte .un { text-decoration: underline; text-underline-offset: 2px; }
.rte .w2 { width: 59px; } .rte .w3 { width: 54px; gap: 8px; } .rte .w4 { width: 53px; gap: 8px; }
.rte svg { width: 20px; height: 16px; fill: none; stroke: #fff; stroke-width: 1.800; }
.rte .w2 svg { width: 44px; } .rte svg.car { width: 8px; height: 6px; } .rte svg.sm { width: 12px; }
.rte .f { fill: #fff; stroke: none; }
.page p { font: 12px/16px "Liberation Serif", "Times New Roman", serif; letter-spacing: .11px; color: #777; padding-top: 1px; padding-left: 1px; white-space: nowrap; }
.page p u { text-decoration: underline dotted #d33; text-underline-offset: 2px; }
.foot { flex: 1; display: flex; background: linear-gradient(#1c0700 0, #2a0a00 18px, transparent 18px), #401002; }
.wood { width: 53px; background: linear-gradient(rgba(0,0,0,.45) 18px, transparent 18px), repeating-linear-gradient(90deg, #4a1f06 0 5px, #502407 5px 9px, #421a04 9px 12px, #562909 12px 20px, #4b2006 20px 24px); }
.cta { flex: 1; display: flex; justify-content: flex-end; align-items: center; padding: 9px 24px 0 0; gap: 11px; margin-right: -1px; }
.cta span { font: 300 12.200px/16px "Open Sans", sans-serif; letter-spacing: 1.480px; color: #d2bdb5; padding-bottom: 2px; }
.cta a { width: 114px; height: 36px; border-radius: 18px; background: #fff; border: 1px solid #c9aaa0; text-align: center; font: 12.200px/37px "Open Sans", sans-serif; letter-spacing: .4px; color: #5b9cc6; }
.vbar { width: 12px; background: #f1f1f1; display: flex; flex-direction: column; align-items: center; flex: none; padding: 3px 0; }
.vbar i { border: 3px solid transparent; }
.vbar .up { border-bottom-color: #444; border-top: 0; margin-top: 1px; }
.vbar .dn { border-top-color: #444; border-bottom: 0; margin: auto 0 3px; }
.vbar .thumbbar { border: 0; width: 10px; height: 74px; background: #bdbdbd; margin-top: 556px; }

/* download shelf */
.downloads { height: 35px; flex: none; background: #0a0a0a; border-top: 1px solid #a5a5a5; display: flex; align-items: center; padding-left: 3px; gap: 2.200px; color: #ddd; }
.item { width: 164px; height: 29px; border: 1px solid #777; border-radius: 2px; background: linear-gradient(#4c4c4c, #343434); display: flex; align-items: center; padding-left: 7px; flex: none; }
.item svg { width: 13px; height: 13px; }
.item span { margin-left: 9px; flex: 1; letter-spacing: -.05px; }
.item i { width: 10px; height: 27px; border-left: 1px solid #777; position: relative; }
.item i::after { content: ""; position: absolute; left: 2px; top: 10px; border: 2.500px solid transparent; border-top-color: #181818; }
.dla { width: 11px; height: 11px; margin-left: 49px; color: #777; }
.downloads u { margin: 0 12px 0 3px; letter-spacing: -.12px; }
.dlx { width: 7px; height: 7px; color: #888; }
.taskbar { width: 1024px; height: 7px; flex: none; }

/* file manager window */
.explorer { position: absolute; left: 172px; top: 64px; width: 751px; height: 502px; border-radius: 6px; border: 1px solid #cfe7dc; padding: 0 5px 5px; display: flex; flex-direction: column; box-shadow: 0 0 0 1px #1d3b2e, 0 1px 9px 3px rgba(0,0,0,.65);
  background: linear-gradient(90deg, rgba(210,225,220,.55), rgba(120,150,130,0) 14%), linear-gradient(90deg, transparent 86%, rgba(150,190,90,.75)) 0 0 / 100% 50px no-repeat, linear-gradient(#14261f 0, #1b3a35 6px, #1b7c81 11px, #1b7f85 20px, #3b9d8c 27px, #74c493 38px, #79cf96 48px, #7bcb97 100%); }
.caption { height: 14px; display: flex; justify-content: flex-end; flex: none; margin-right: -3px; }
.caption svg { width: 84px; height: 14px; }
.addr { height: 34px; flex: none; display: flex; align-items: center; padding-top: 7px; }
.bf { width: 56px; height: 22px; }
.crumbs { width: 527px; height: 18px; display: flex; align-items: center; background: rgba(222,242,238,.87); border: 1px solid #4f8480; margin-left: 0; padding-left: 1px; }
.crumbs .fi { width: 13px; height: 13px; }
.crumbs i { border: 3px solid transparent; border-left: 4px solid #111; border-right: 0; margin: 0 7px 0 7px; }
.crumbs .fi + i { margin-left: 6px; }
.crumbs i.d { border: 3px solid transparent; border-top: 4px solid #111; border-bottom: 0; margin: 0 6px 0 auto; }
.crumbs span { letter-spacing: -.14px; }
.crumbs .ref { width: 19px; height: 17px; border-left: 1px solid #6d9c94; padding: 3px 2px; }
.search { width: 150px; height: 18px; margin-left: 6px; background: rgba(222,242,232,.8); border: 1px solid #4f8480; display: flex; align-items: center; justify-content: space-between; padding: 0 4px 0 6px; font-style: italic; color: #56706d; letter-spacing: 0; }
.search svg { width: 12px; height: 12px; }
.client { flex: 1; min-height: 0; background: #fcfcfc; border: 1px solid #3c6653; display: flex; flex-direction: column; }
.cmds { height: 26px; flex: none; background: linear-gradient(#f9fbfe, #e6eef9 50%, #d9e5f4 51%, #dde8f6); border-bottom: 1px solid #a9bacd; color: #1e395b; display: grid; grid-template-columns: 72px 64px 79px 51px 44px auto 88px; padding-left: 13px; align-items: center; letter-spacing: -.1px; }
.cmds span { display: flex; align-items: center; gap: 4px; white-space: nowrap; }
.cmds i, .libhead i { display: inline-block; border: 3.500px solid transparent; border-top: 4px solid #1e395b; border-bottom: 0; }
.cmds svg { width: 13px; height: 13px; } .cmds .vw { width: 86px; height: 16px; margin-left: -8px; }
.mid { height: 344px; display: flex; flex: none; }
.tree { list-style: none; width: 107px; overflow: hidden; padding-top: 7px; }
.tree li { height: 16.800px; display: flex; align-items: center; gap: 4px; padding-left: 22px; white-space: nowrap; width: 106px; overflow: hidden; }
.tree li.top { padding-left: 14px; gap: 4px; }
.tree li.gap { margin-top: 16.800px; }
.tree li.sel { background: linear-gradient(#f4f4f4, #e4e4e4); border: 1px solid #dedede; padding-left: 21px; }
.tree svg { width: 13px; height: 13px; }
.scroll { width: 13px; background: #f0f0f0; display: flex; flex-direction: column; align-items: center; flex: none; }
.scroll .a { border: 3px solid transparent; border-bottom-color: #444; border-top: 0; margin: 6px 0 5px; }
.scroll .a.down { border: 3px solid transparent; border-top-color: #444; border-bottom: 0; margin: auto 0 5px; }
.scroll .t { width: 12px; border: 1px solid #979797; border-radius: 1px; background: repeating-linear-gradient(#666 0 1px, transparent 1px 2.500px) center / 5px 7px no-repeat, linear-gradient(90deg, #f4f4f4, #dcdce0 60%, #cdcdd2); }
.left .t { height: 213px; } .right .t { height: 251px; }
.left { margin-left: -1px; margin-right: 1px; }
.content { flex: 1; display: flex; flex-direction: column; min-width: 0; border-left: 1px solid #dde6f0; }
.libhead { height: 44px; flex: none; display: flex; justify-content: space-between; background: linear-gradient(90deg, #fdfdfe, #f1f4fb 50%, #fcfcfd); border-bottom: 1px solid #dbe3ef; padding: 5px 28px 0 14px; overflow: hidden; color: #5f6b7c; }
.libhead h1 { font-size: 14.300px; line-height: 20px; color: #1b7430; letter-spacing: -.05px; }
.libhead small { display: block; font-size: 9.300px; line-height: 12px; color: #555; }
.libhead p { padding-top: 11px; letter-spacing: -.1px; } .libhead b { color: #1b5f95; font-weight: normal; margin: 0 4px 0 8px; }
.libhead i { border-top-color: #1b5f95; vertical-align: 2px; }
.files { flex: 1; display: flex; justify-content: space-between; min-height: 0; overflow: hidden; }
.grid { display: grid; grid-template-columns: repeat(7, 84.800px); grid-template-rows: 94px 117px 94px; padding: 6px 0 0 11px; }
figure { display: flex; flex-direction: column; align-items: center; text-align: center; }
figure svg { width: 76px; height: 76px; }
figcaption { padding-top: 1px; line-height: 12.200px; white-space: nowrap; letter-spacing: -.13px; }
.hot { margin: -2px 1px 0; padding-top: 2px; height: 93px; background: linear-gradient(#eaf2fb, #c2daf3); border: 1px solid #9dbfe0; border-radius: 2px; width: 83px; }
.hot svg { margin-top: -1px; }
.hot figcaption { background: #fff; border: 1px solid #111; width: 74px; height: 15px; padding: 0; line-height: 13px; margin-top: 0; }
mark { background: #3997e6; color: #fff; }
.right { width: 12px; margin-right: 0; }
.details { flex: 1; background: #f0f4fb; border-top: 1px solid #c2d3e6; display: flex; padding: 1px 0 0 12px; color: #5a6b85; }
.details > svg { width: 74px; height: 74px; }
.details div { display: flex; flex-direction: column; padding: 3px 0 0 8px; }
.details b { font-weight: normal; font-size: 10.600px; line-height: 14px; color: #111; letter-spacing: -.16px; }
.details span { line-height: 14.500px; } .details em { color: #1e395b; }
.details .dm { padding-left: 26px; letter-spacing: -.13px; }

.ink { position: absolute; left: 0; top: 0; width: 1036px; height: 800px; fill: none; stroke: #f80606; stroke-width: 6.200; stroke-linecap: round; stroke-linejoin: round; pointer-events: none; }
```
